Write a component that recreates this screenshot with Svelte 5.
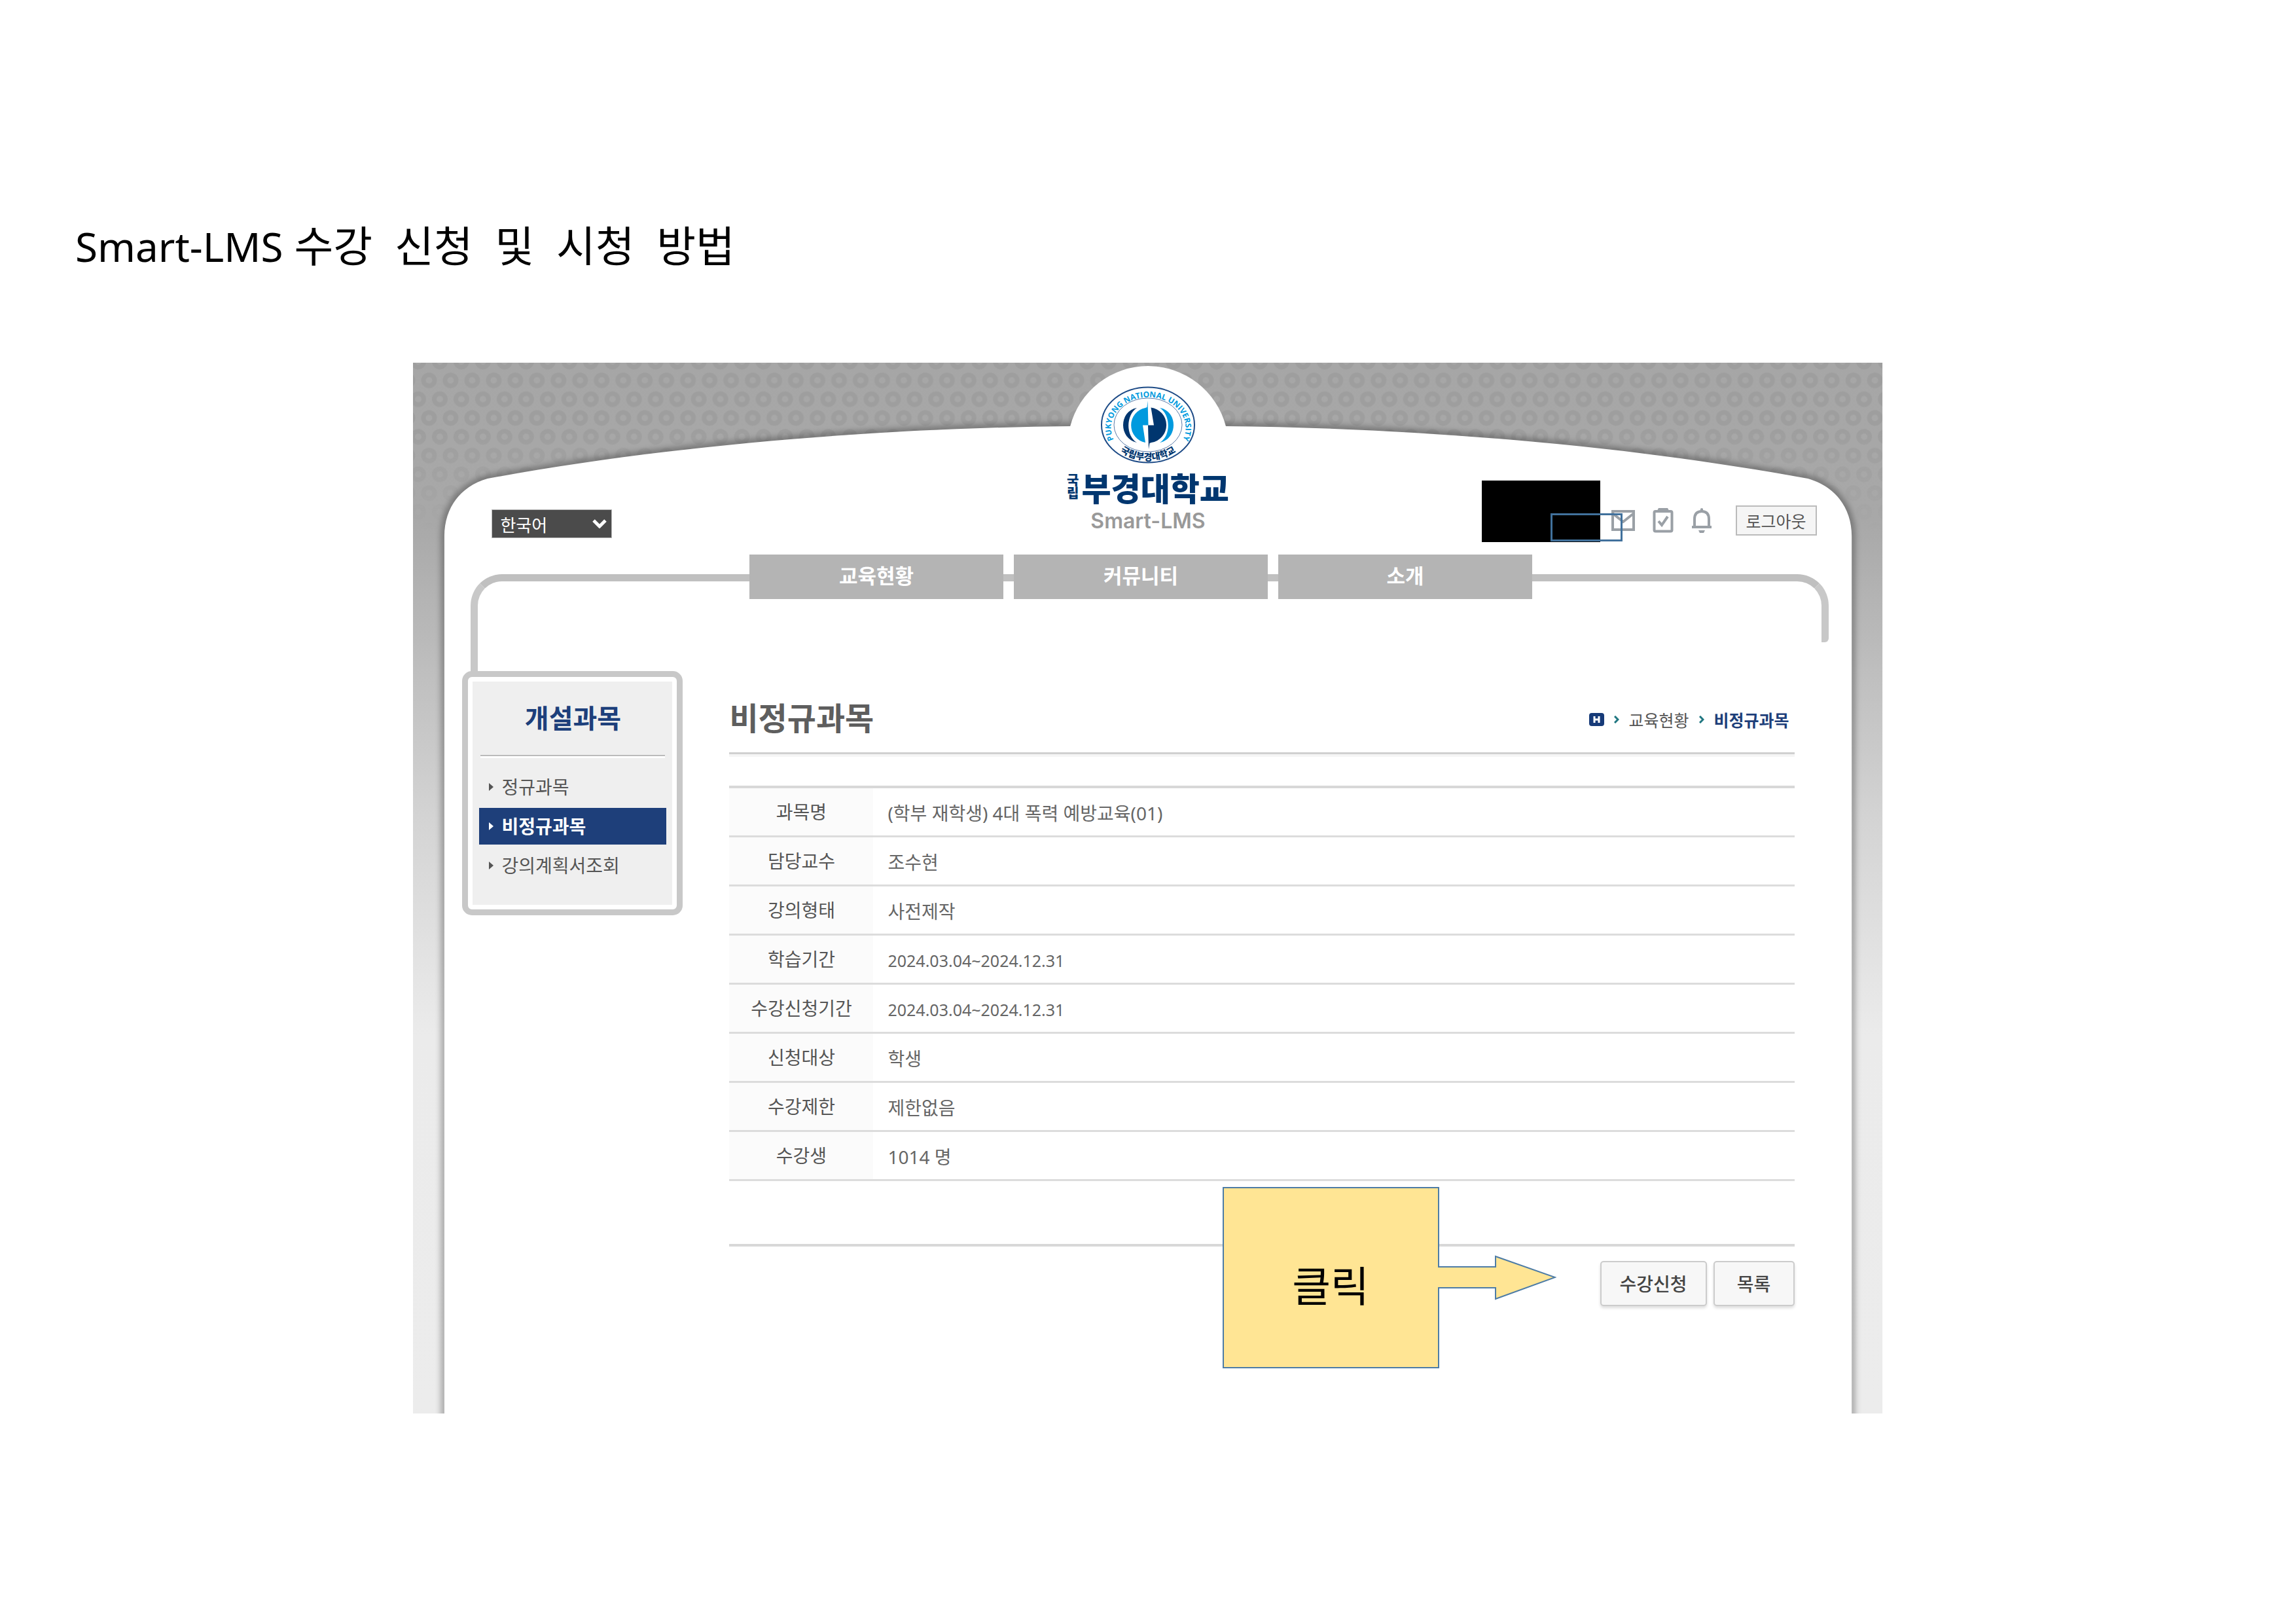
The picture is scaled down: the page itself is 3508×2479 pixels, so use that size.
<script>
  const menus = ['교육현황', '커뮤니티', '소개'];

  const courses = [
    { name: '정규과목', active: false },
    { name: '비정규과목', active: true },
    { name: '강의계획서조회', active: false }
  ];

  const details = [
    { label: '과목명', value: '(학부 재학생) 4대 폭력 예방교육(01)' },
    { label: '담당교수', value: '조수현' },
    { label: '강의형태', value: '사전제작' },
    { label: '학습기간', value: '2024.03.04~2024.12.31', date: true },
    { label: '수강신청기간', value: '2024.03.04~2024.12.31', date: true },
    { label: '신청대상', value: '학생' },
    { label: '수강제한', value: '제한없음' },
    { label: '수강생', value: '1014 명' }
  ];

  let language = 'ko';
</script>

<div class="sheet">
  <h1><span>Smart-LMS</span>  수강  신청  및  시청  방법</h1>

  <div class="portal">
    <svg class="backdrop" viewBox="0 0 2247 1605" preserveAspectRatio="none" aria-hidden="true">
      <defs>
        <linearGradient id="wall" x1="0" y1="0" x2="0" y2="1">
          <stop offset="0" stop-color="#a6a6a6" />
          <stop offset="0.15" stop-color="#a8a8a8" />
          <stop offset="0.31" stop-color="#c1c1c1" />
          <stop offset="0.43" stop-color="#d3d3d3" />
          <stop offset="0.64" stop-color="#ebebeb" />
          <stop offset="1" stop-color="#ececec" />
        </linearGradient>
        <linearGradient id="fade" x1="0" y1="0" x2="0" y2="1">
          <stop offset="0.4" stop-color="#fff" />
          <stop offset="1" stop-color="#000" />
        </linearGradient>
        <pattern id="rings" width="33" height="57.4" patternUnits="userSpaceOnUse">
          <g fill="none" stroke="#9e9e9e" stroke-width="7">
            <circle cx="24.5" cy="27" r="8.5" />
            <circle cx="-8.5" cy="27" r="8.5" />
            <circle cx="8" cy="55.7" r="8.5" />
            <circle cx="41" cy="55.7" r="8.5" />
            <circle cx="8" cy="-1.7" r="8.5" />
            <circle cx="41" cy="-1.7" r="8.5" />
          </g>
        </pattern>
        <mask id="ring-mask"><rect width="2247" height="255" fill="url(#fade)" /></mask>
        <filter id="soft" x="-5%" y="-5%" width="110%" height="110%">
          <feGaussianBlur stdDeviation="5" />
        </filter>
        <path
          id="paper"
          d="M48 1605 V265 C48 222 72 189 114 177 C380 128 700 100 1005 97 A123 123 0 0 1 1243 97 C1547 100 1867 128 2133 177 C2175 189 2200 222 2200 265 V1605 Z"
        />
      </defs>
      <rect width="2247" height="1605" fill="url(#wall)" />
      <rect width="2247" height="255" fill="url(#rings)" mask="url(#ring-mask)" />
      <path
        d="M48 1640 V265 C48 222 72 189 114 177 C380 128 700 100 1006 97 H1241 C1547 100 1867 128 2133 177 C2175 189 2200 222 2200 265 V1640"
        fill="none" stroke="#000" stroke-opacity="0.32" stroke-width="10" filter="url(#soft)"
      />
      <use href="#paper" fill="#fff" />
    </svg>

    <header>
      <div class="language">
        <select bind:value={language} aria-label="언어">
          <option value="ko">한국어</option>
          <option value="en">English</option>
        </select>
        <svg width="22" height="14" viewBox="0 0 22 14" aria-hidden="true">
          <path d="M2 2 L11 11 L20 2" fill="none" stroke="#fff" stroke-width="5" />
        </svg>
      </div>

      <a class="logo" href="/">
        <svg width="144" height="118" viewBox="0 0 144 118" aria-hidden="true">
          <defs>
            <path id="arc-top" d="M20 82 A57 47 0 1 1 125 82" />
            <path id="arc-bottom" d="M18 89 A65 54 0 0 0 126 89" />
          </defs>
          <ellipse cx="72" cy="59" rx="71" ry="57.5" fill="#fff" stroke="#1c4a86" stroke-width="2" />
          <ellipse cx="72" cy="59" rx="52" ry="41" fill="none" stroke="#5b7ba8" stroke-width="1" />
          <text class="seal-en" text-anchor="middle"><textPath href="#arc-top" startOffset="50%">PUKYONG NATIONAL UNIVERSITY</textPath></text>
          <text class="seal-ko" text-anchor="middle"><textPath href="#arc-bottom" startOffset="50%">국립부경대학교</textPath></text>
          <path d="M55 33 C27 38 27 80 55 86 C38 76 38 44 55 33 Z" fill="#00366f" />
          <path d="M90 33 C118 38 118 80 90 86 C107 76 107 44 90 33 Z" fill="#009ade" />
          <path d="M71.5 22 L72.5 59.5 H64 L68 86 A27 27 0 0 1 68 33 L70.5 32 Z" fill="#009ade" />
          <path d="M73 96 L72 59.5 H81 L76.5 32.5 A27 27 0 0 1 77 86 L74.5 87 Z" fill="#00366f" />
        </svg>
        <span class="wordmark">
          <span class="national"><span>국</span><span>립</span></span>
          <strong>부경대학교</strong>
        </span>
        <span class="product">Smart-LMS</span>
      </a>

      <div class="tools">
        <div class="user"><span class="marker"></span></div>
        <div class="actions">
          <button class="icon mail" aria-label="쪽지">
            <svg width="36" height="32" viewBox="0 0 36 32">
              <g fill="none" stroke="#9aa0a6" stroke-width="4">
                <rect x="2" y="2" width="32" height="28" />
                <path d="M3 6 L18 18 L33 6" />
              </g>
            </svg>
          </button>
          <button class="icon clipboard" aria-label="할일">
            <svg width="32" height="38" viewBox="0 0 32 38">
              <rect x="2.5" y="5" width="27" height="30.5" rx="2" fill="none" stroke="#9aa0a6" stroke-width="4" />
              <path d="M7 4 L9 0 H23 L25 4 V7 H7 Z" fill="#9aa0a6" />
              <path d="M9 20 L14 26 L23 13" fill="none" stroke="#9aa0a6" stroke-width="4" />
            </svg>
          </button>
          <button class="icon bell" aria-label="알림">
            <svg width="32" height="38" viewBox="0 0 32 38">
              <path d="M5 28 V17 C5 9 9 5 16 5 C23 5 27 9 27 17 V28" fill="none" stroke="#9aa0a6" stroke-width="4" />
              <path d="M14 4 V1 L16 0 L18 1 V4 Z M1 27 H31 V31 H1 Z M11 34 H21 L19 38 H13 Z" fill="#9aa0a6" />
            </svg>
          </button>
          <button class="logout">로그아웃</button>
        </div>
      </div>
    </header>

    <nav class="menu">
      {#each menus as menu}
        <a href="#menu">{menu}</a>
      {/each}
    </nav>

    <div class="body">
      <aside>
        <div class="panel">
          <h2>개설과목</h2>
          <ul>
            {#each courses as course}
              <li>
                <a href="#course" class:active={course.active}>
                  <svg width="7" height="12" viewBox="0 0 7 12" aria-hidden="true">
                    <path d="M0 0 L7 6 L0 12 Z" fill="currentColor" />
                  </svg>
                  {course.name}
                </a>
              </li>
            {/each}
          </ul>
        </div>
      </aside>

      <main>
        <div class="heading">
          <h2>비정규과목</h2>
          <div class="breadcrumb">
            <a href="/" aria-label="Home">
              <svg width="23" height="20" viewBox="0 0 23 20">
                <rect width="23" height="20" rx="4" fill="#163a78" />
                <path d="M8 5 V15 M15 5 V15 M8 10 H15" stroke="#fff" stroke-width="3" fill="none" />
              </svg>
            </a>
            <svg width="8" height="12" viewBox="0 0 8 12" aria-hidden="true">
              <path d="M1 1 L6 6 L1 11" fill="none" stroke="#1f7680" stroke-width="3" />
            </svg>
            <a href="#status">교육현황</a>
            <svg width="8" height="12" viewBox="0 0 8 12" aria-hidden="true">
              <path d="M1 1 L6 6 L1 11" fill="none" stroke="#1f7680" stroke-width="3" />
            </svg>
            <a class="current" href="#current">비정규과목</a>
          </div>
        </div>

        <table>
          <tbody>
            {#each details as row}
              <tr>
                <th scope="row">{row.label}</th>
                <td class:date={row.date}>{row.value}</td>
              </tr>
            {/each}
          </tbody>
        </table>

        <div class="buttons">
          <button>수강신청</button>
          <button>목록</button>
        </div>

        <div class="callout">
          <svg width="510" height="277" viewBox="0 0 510 277" aria-hidden="true">
            <path
              d="M1 1 H330 V122 H417 V106 L508 138 L417 171 V154 H330 V276 H1 Z"
              fill="#ffe594" stroke="#4d7ca6" stroke-width="2"
            />
          </svg>
          <p>클릭</p>
        </div>
      </main>
    </div>
  </div>
</div>

<style>
  :global(body) {
    margin: 0;
    background: #fff;
  }

  .sheet {
    padding: 330px 18%;
    font-family: 'Noto Sans', 'Noto Sans CJK KR', sans-serif;
    color: #555;
  }

  h1 {
    margin: 0 0 133px;
    /* starts left of the portal, near the edge of the sheet */
    margin-left: -23%;
    font-size: 65px;
    line-height: 90px;
    font-weight: 400;
    white-space: pre-wrap;
    color: #000;
  }

  h1 span {
    font-size: 62px;
  }

  h2,
  p,
  ul {
    margin: 0;
    padding: 0;
  }

  a {
    color: inherit;
    text-decoration: none;
  }

  svg {
    display: block;
    flex: none;
  }

  button,
  select {
    font-family: inherit;
    color: inherit;
    cursor: pointer;
  }

  .portal {
    position: relative;
    padding-bottom: 164px;
  }

  .backdrop {
    position: absolute;
    inset: 0;
    width: 100%;
    height: 100%;
  }

  header {
    position: relative;
    display: grid;
    grid-template-columns: 1fr auto 1fr;
    align-items: end;
    padding: 36px 101px 19px;
  }

  .language {
    display: grid;
    align-items: center;
    width: 184px;
    margin: 0 0 6px 19px;
  }

  .language select,
  .language svg {
    grid-area: 1 / 1;
  }

  .language select {
    appearance: none;
    width: 100%;
    height: 44px;
    padding: 4px 12px 0;
    border: 1px solid #bbb;
    border-radius: 0;
    background: #4b4b4b;
    color: #fff;
    font-size: 26px;
  }

  .language svg {
    justify-self: end;
    margin-right: 8px;
    pointer-events: none;
  }

  .logo {
    display: flex;
    flex-direction: column;
    align-items: center;
    margin-bottom: 12px;
  }

  .seal-en {
    font-family: 'Open Sans', sans-serif;
    font-size: 12px;
    font-weight: 700;
    fill: #009ade;
  }

  .seal-ko {
    font-size: 14px;
    font-weight: 900;
    fill: #00366f;
  }

  .wordmark {
    display: flex;
    align-items: center;
    gap: 4px;
    margin: 10px 0 6px;
    line-height: 52px;
    color: #00366f;
  }

  .wordmark strong {
    font-family: 'Noto Sans CJK KR', sans-serif;
    font-size: 49px;
    font-weight: 900;
  }

  .national {
    display: flex;
    flex-direction: column;
    font-size: 20px;
    font-weight: 900;
    line-height: 20px;
  }

  .product {
    font-family: Inter, sans-serif;
    font-size: 32px;
    font-weight: 600;
    line-height: 40px;
    color: #999;
  }

  .tools {
    display: flex;
    justify-content: flex-end;
    align-items: flex-end;
    gap: 17px;
  }

  .user {
    position: relative;
    width: 181px;
    height: 94px;
    background: #000;
  }

  .marker {
    position: absolute;
    left: 105px;
    top: 50px;
    z-index: 1;
    box-sizing: border-box;
    width: 110px;
    height: 43px;
    border: 3px solid #41719c;
  }

  .actions {
    display: flex;
    align-items: center;
    gap: 27px;
    margin-bottom: 10px;
  }

  .icon {
    padding: 0;
    border: 0;
    background: none;
  }

  .logout {
    width: 124px;
    height: 46px;
    margin-left: 9px;
    padding: 0;
    border: 2px solid #bbb;
    background: #f5f5f5;
    font-size: 25px;
  }

  .menu {
    position: relative;
    display: flex;
    justify-content: center;
    gap: 16px;
    padding-right: 22px;
  }

  .menu::before,
  .menu::after {
    content: '';
    position: absolute;
    top: 30px;
    box-sizing: border-box;
    border: 0 solid #c8c8c8;
    border-top: 11px solid #c0c0c0;
  }

  .menu::before {
    left: 88px;
    right: 50%;
    height: 150px;
    border-left-width: 11px;
    border-top-left-radius: 48px;
  }

  .menu::after {
    left: 50%;
    right: 83px;
    height: 104px;
    border-right-width: 11px;
    border-radius: 0 48px 6px 0;
  }

  .menu a {
    position: relative;
    z-index: 1;
    flex: 0 1 388px;
    box-sizing: border-box;
    height: 68px;
    background: #b4b4b4;
    color: #fff;
    font-size: 31px;
    font-weight: 700;
    line-height: 64px;
    text-align: center;
  }

  .body {
    position: relative;
    display: flex;
    align-items: flex-start;
    gap: 71px;
    margin-top: 110px;
    padding: 0 135px 0 75px;
  }

  aside {
    flex: none;
    box-sizing: border-box;
    width: 337px;
    padding: 7px;
    border: 9px solid #c8c8c8;
    border-radius: 15px;
    background: #fff;
  }

  .panel {
    padding: 0 9px 32px 10px;
    background: #efefef;
  }

  .panel h2 {
    margin: 0 2px 19px;
    border-bottom: 2px solid #bbb;
    box-shadow: 0 3px #fff;
    color: #1d3f7b;
    font-size: 40px;
    line-height: 112px;
    text-align: center;
  }

  .panel ul {
    display: flex;
    flex-direction: column;
    gap: 4px;
    list-style: none;
  }

  .panel li a {
    display: flex;
    align-items: center;
    gap: 12px;
    padding-left: 15px;
    font-size: 28px;
    line-height: 56px;
    white-space: nowrap;
  }

  .panel li a.active {
    background: #1e3f7a;
    color: #fff;
    font-weight: 700;
  }

  main {
    position: relative;
    flex: 1;
    min-width: 0;
  }

  .heading {
    display: flex;
    justify-content: space-between;
    align-items: center;
    height: 104px;
    padding: 20px 8px 0 0;
    border-bottom: 3px solid #d0d0d0;
    box-shadow: 0 4px #f5f5f5;
  }

  .heading h2 {
    font-size: 48px;
    line-height: 64px;
    color: #5e5e5e;
  }

  .breadcrumb {
    display: flex;
    align-items: center;
    gap: 15px;
    padding-top: 4px;
    font-size: 25px;
  }

  .breadcrumb .current {
    color: #1e3f7a;
    font-weight: 700;
  }

  table {
    width: 100%;
    margin-top: 48px;
    border-top: 4px solid #d8d8d8;
    border-spacing: 0;
    font-size: 28px;
    line-height: 40px;
  }

  th,
  td {
    box-sizing: border-box;
    height: 75px;
    padding: 0;
    border-bottom: 3px solid #dcdcdc;
  }

  th {
    width: 220px;
    background: #fbfbfb;
    font-weight: 400;
  }

  td {
    padding: 3px 0 0 22px;
    color: #666;
  }

  .date {
    font-size: 25px;
  }

  .buttons {
    display: flex;
    justify-content: flex-end;
    gap: 10px;
    margin-top: 96px;
    padding-top: 22px;
    border-top: 4px solid #d8d8d8;
  }

  .buttons button {
    min-width: 124px;
    height: 69px;
    padding: 0 28px 2px;
    border: 2px solid #ccc;
    border-radius: 5px;
    background: #f7f7f7;
    box-shadow: 0 3px 4px #0002;
    color: #444;
    font-size: 28px;
    font-weight: 500;
  }

  .callout {
    position: absolute;
    top: 788px;
    right: 364px;
    display: grid;
  }

  .callout svg,
  .callout p {
    grid-area: 1 / 1;
  }

  .callout p {
    width: 331px;
    padding-top: 106px;
    box-sizing: border-box;
    color: #000;
    font-size: 64px;
    line-height: 90px;
    text-align: center;
  }
</style>
